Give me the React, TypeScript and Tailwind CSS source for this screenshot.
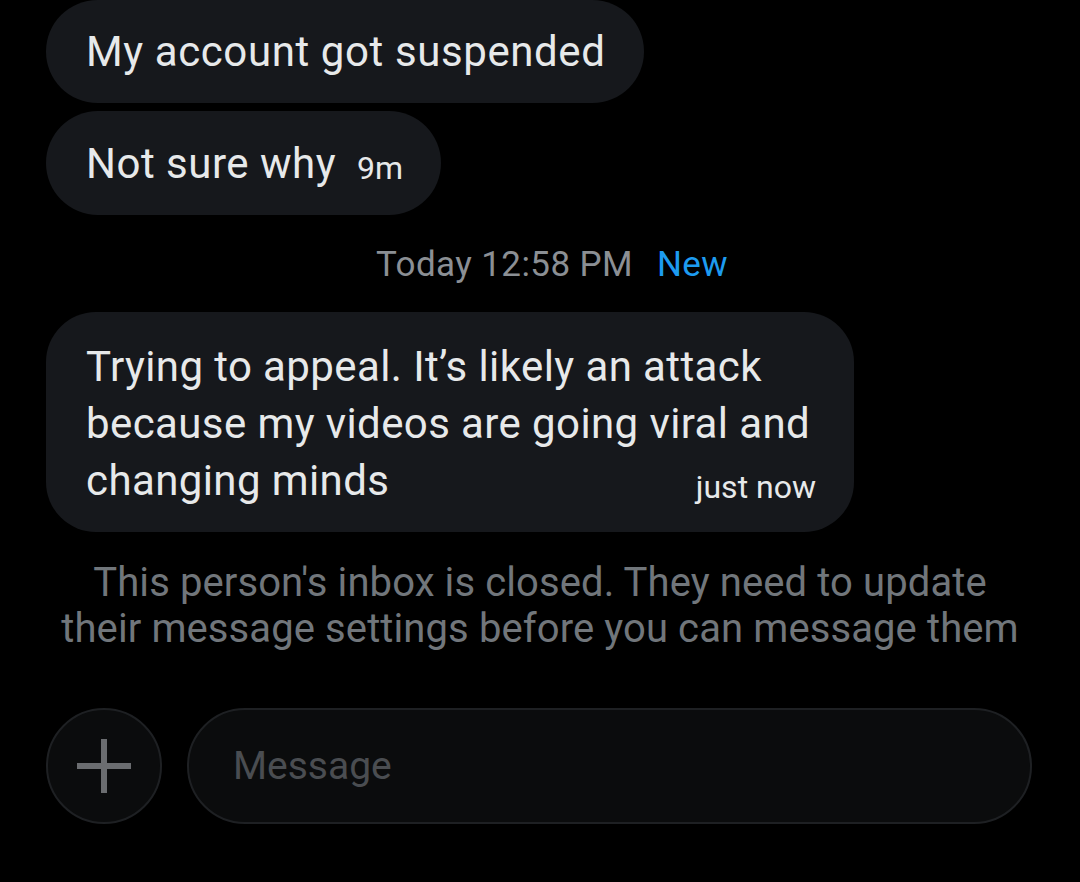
const font = { fontFamily: 'Roboto, "Noto Sans", sans-serif' };

function Bubble({ children, className = '' }: { children: React.ReactNode; className?: string }) {
  return (
    <div className={`self-start bg-[#16181c] text-[#e7e9ea] whitespace-nowrap ${className}`}>{children}</div>
  );
}

export default function App() {
  return (
    <div className="w-[1080px] h-[882px] bg-black overflow-hidden" style={font}>
      <div className="flex flex-col px-[46px]">
        {/* incoming messages */}
        <Bubble className="h-[103px] rounded-[52px] pl-[40px] pr-[38px] flex items-center text-[42px] tracking-[0.6px]">
          My account got suspended
        </Bubble>
        <Bubble className="mt-[8px] h-[104px] rounded-[52px] pl-[40px] pr-[38px] flex items-center gap-[21px] text-[42px] tracking-[0.5px]">
          <span>Not sure why</span>
          <span className="text-[32px] mt-[10px] tracking-normal">9m</span>
        </Bubble>

        {/* day divider */}
        <div className="mt-[30px] flex justify-center items-center gap-[24px] pl-[24px] text-[35px] leading-[40px] tracking-[0.4px]">
          <span className="text-[#8b8f94]">Today 12:58 PM</span>
          <span className="text-[#1d9bf0]">New</span>
        </div>

        <Bubble className="mt-[27px] w-[808px] rounded-[50px] pl-[40px] pr-[38px] pt-[26px] pb-[23px] text-[42px] leading-[57px] tracking-[0.4px]">
          <div>Trying to appeal. It’s likely an attack</div>
          <div>because my videos are going viral and</div>
          <div className="flex justify-between items-end">
            <span>changing minds</span>
            <span className="text-[32px] leading-[40px] mb-[2px] tracking-normal">just now</span>
          </div>
        </Bubble>

        {/* closed inbox notice */}
        <div className="mt-[28px] text-center text-[#71767b] text-[40px] leading-[46px] tracking-[0.1px]">
          This person's inbox is closed. They need to update
          <br />
          their message settings before you can message them
        </div>

        {/* composer */}
        <div className="mt-[56px] flex items-center gap-[25px]">
          <div className="w-[116px] h-[116px] shrink-0 rounded-full border-2 border-[#1e2023] bg-[#0b0c0d] flex items-center justify-center">
            <svg width="54" height="54" viewBox="0 0 54 54" fill="#6b6d70">
              <rect x="0" y="24" width="54" height="6" />
              <rect x="24" y="0" width="6" height="54" />
            </svg>
          </div>
          <div className="flex-1 mr-[2px] h-[116px] rounded-full border-2 border-[#1e2023] bg-[#0b0c0d] flex items-center pl-[44px] text-[39px] text-[#4a4d51]">
            Message
          </div>
        </div>
      </div>
    </div>
  );
}
